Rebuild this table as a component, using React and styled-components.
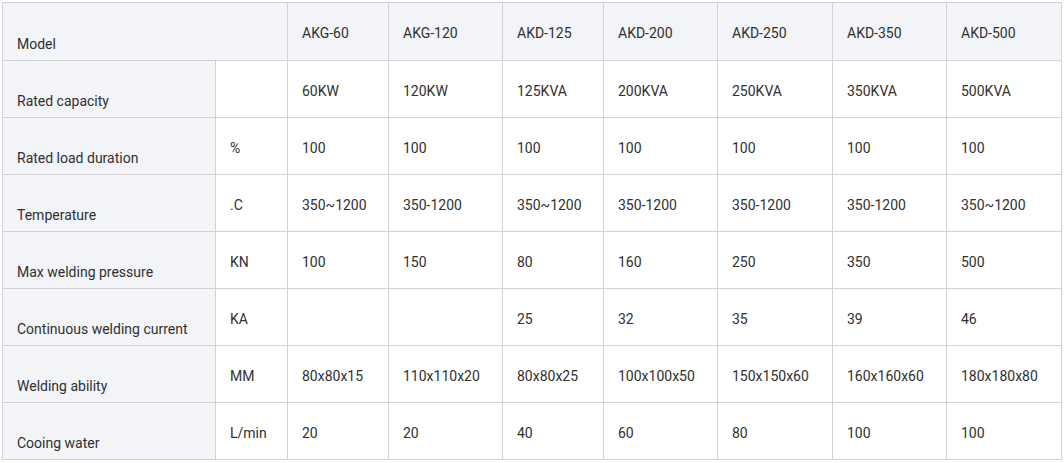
import styled, { createGlobalStyle } from "styled-components";

const GlobalStyle = createGlobalStyle`
  html, body {
    margin: 0;
    padding: 0;
    background: #ffffff;
  }
  body {
    font-family: Roboto, "Liberation Sans", Arial, sans-serif;
  }
`;

const Wrap = styled.div`
  padding: 2px 0 0 2px;
`;

const Table = styled.table`
  border-collapse: collapse;
  table-layout: fixed;
  width: 1059px;
  font-size: 14px;
  color: #303030;
`;

const Row = styled.tr`
  height: ${(p) => (p.$head ? 58 : 57)}px;
`;

const Cell = styled.td`
  border: 1px solid #d2d2d2;
  padding: 3px 14px 0;
  line-height: 18px;
  vertical-align: middle;
  background: ${(p) => (p.$shade ? "#f3f4f8" : "#ffffff")};
  white-space: nowrap;
`;

const LabelCell = styled(Cell)`
  vertical-align: bottom;
  padding: 0 14px 7px;
`;

const models = ["AKG-60", "AKG-120", "AKD-125", "AKD-200", "AKD-250", "AKD-350", "AKD-500"];

const rows = [
  { label: "Rated capacity", unit: "", values: ["60KW", "120KW", "125KVA", "200KVA", "250KVA", "350KVA", "500KVA"] },
  { label: "Rated load duration", unit: "%", values: ["100", "100", "100", "100", "100", "100", "100"] },
  { label: "Temperature", unit: ".C", values: ["350~1200", "350-1200", "350~1200", "350-1200", "350-1200", "350-1200", "350~1200"] },
  { label: "Max welding pressure", unit: "KN", values: ["100", "150", "80", "160", "250", "350", "500"] },
  { label: "Continuous welding current", unit: "KA", values: ["", "", "25", "32", "35", "39", "46"] },
  { label: "Welding ability", unit: "MM", values: ["80x80x15", "110x110x20", "80x80x25", "100x100x50", "150x150x60", "160x160x60", "180x180x80"] },
  { label: "Cooing water", unit: "L/min", values: ["20", "20", "40", "60", "80", "100", "100"] },
];

const widths = [213, 72, 101, 114, 101, 114, 115, 114, 115];

export default function App() {
  return (
    <>
      <GlobalStyle />
      <Wrap>
        <Table>
          <colgroup>
            {widths.map((w, i) => (
              <col key={i} style={{ width: w }} />
            ))}
          </colgroup>
          <tbody>
            <Row $head>
              <LabelCell $shade colSpan={2}>Model</LabelCell>
              {models.map((m) => (
                <Cell $shade key={m}>{m}</Cell>
              ))}
            </Row>
            {rows.map((r) => (
              <Row key={r.label}>
                <LabelCell $shade>{r.label}</LabelCell>
                <Cell>{r.unit}</Cell>
                {r.values.map((v, i) => (
                  <Cell key={i}>{v}</Cell>
                ))}
              </Row>
            ))}
          </tbody>
        </Table>
      </Wrap>
    </>
  );
}
